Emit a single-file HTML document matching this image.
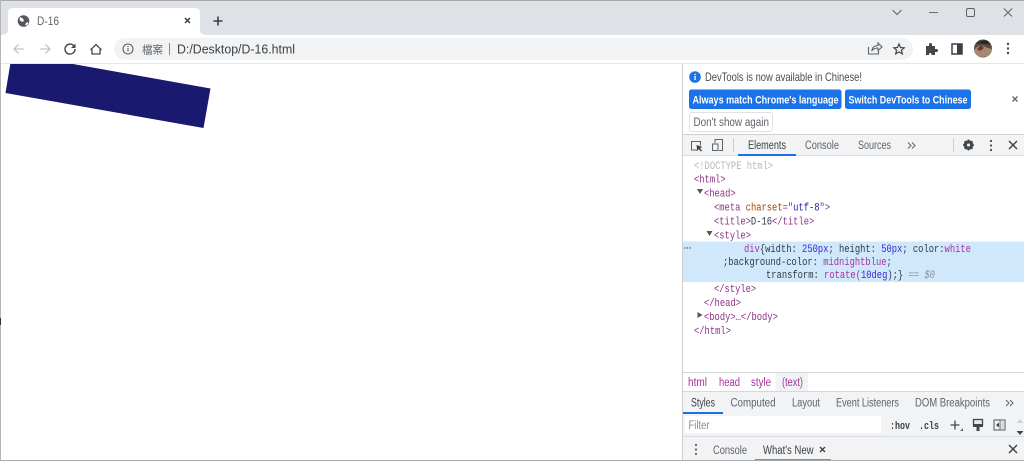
<!DOCTYPE html>
<html><head><meta charset="utf-8"><title>D-16</title>
<style>
html,body{margin:0;padding:0;background:#fff;width:1024px;height:461px;overflow:hidden}
svg{display:block;filter:blur(.35px)}
text{font-family:"Liberation Sans","Noto Sans CJK TC",sans-serif;font-size:11.5px;fill:#5f6368;white-space:pre}
.m text,text.m{font-family:"Liberation Mono",monospace;font-size:11px}
.t{fill:#8f2f8a}.a{fill:#994500}.v{fill:#1a1aa6}.d{fill:#303942}.n{fill:#3a1fd0}.p{fill:#a8329f}
text.w{fill:#fff;font-weight:bold;font-size:11px}
text.k{fill:#3c4043}
</style></head><body>
<svg width="1024" height="461" viewBox="0 0 1024 461" xmlns="http://www.w3.org/2000/svg">
<rect width="1024" height="461" fill="#fff"/>
<!-- chrome top -->
<rect width="1024" height="35" fill="#dee1e6"/>
<rect width="1024" height="1" fill="#a8a8a8"/>
<path d="M0 35C6 35 8 33 8 30V13Q8 8 13 8H195Q200 8 200 13V30C200 33 202 35 208 35Z" fill="#fff"/>
<circle cx="23.500" cy="21" r="5.800" fill="#54585c"/>
<path d="M20 17l3 1.500 1 2.500-2 1-2.500-2zM25 24.500l2-2.500 1.500 1-2 2.500z" fill="#fff"/>
<text x="37" y="25" textLength="22" lengthAdjust="spacingAndGlyphs" style="font-size:12px">D-16</text>
<path d="M185 18l5 5M190 18l-5 5" stroke="#3c4043" stroke-width="1.500" fill="none"/>
<path d="M218 16.500v9M213.500 21h9" stroke="#3c4043" stroke-width="1.600" fill="none"/>
<path d="M892.500 10l4.500 4.500 4.500-4.500" stroke="#5f6368" fill="none"/>
<rect x="929" y="12" width="9" height="1" fill="#6b6e72"/>
<rect x="966.500" y="8.500" width="8" height="8" rx="1.500" fill="none" stroke="#5f6368"/>
<path d="M1004 8.500l8 8M1012 8.500l-8 8" stroke="#5f6368" fill="none"/>
<!-- toolbar -->
<rect y="63" width="1024" height="1" fill="#e6e7e9"/>
<rect x="0" y="0" width="1" height="461" fill="#b5b5b5"/>
<rect x="0" y="318" width="1" height="7" fill="#333"/>
<path d="M24 49H14M18.500 44.500L14 49l4.500 4.500" fill="none" stroke="#c3c5c8" stroke-width="1.300"/>
<path d="M40 49H50M45.500 44.500L50 49l-4.500 4.500" fill="none" stroke="#c3c5c8" stroke-width="1.300"/>
<path d="M75 49a5 5 0 1 1-1.500-3.500" fill="none" stroke="#44474a" stroke-width="1.400"/>
<path d="M75.500 43.500v4.500h-4.500z" fill="#44474a"/>
<path d="M92 49.500v4.500h8v-4.500M90.500 50l5.500-5.500 5.500 5.500" fill="none" stroke="#44474a" stroke-width="1.300"/>
<rect x="114" y="38" width="799" height="22" rx="11" fill="#f1f3f4"/>
<circle cx="128" cy="49" r="5" fill="none" stroke="#5f6368" stroke-width="1.100"/>
<path d="M128 48v3.500M128 46v1" stroke="#5f6368" stroke-width="1.100"/>
<text x="142" y="53.500" textLength="21" lengthAdjust="spacingAndGlyphs" style="font-size:11px">檔案</text>
<rect x="169" y="43" width="1" height="12" fill="#8a8d91"/>
<text x="177" y="53.500" textLength="118" lengthAdjust="spacingAndGlyphs" style="font-size:12.500px;fill:#3c4043">D:/Desktop/D-16.html</text>
<path d="M868.500 47v7h10v-3M872 50.500c0-3 2.500-5 6-5v-2.500l4 4-4 3.500v-2.500c-3 0-4.500 1-6 2.500z" fill="none" stroke="#5f6368" stroke-width="1.100"/>
<path d="M899 44l1.500 3.500 3.700.300-2.800 2.400.900 3.700-3.300-2-3.300 2 .900-3.700-2.800-2.400 3.700-.300z" fill="none" stroke="#44474a" stroke-width="1.200"/>
<path d="M926 46h3v-1.500a1.500 1.500 0 0 1 3 0V46h3v3h1.500a1.500 1.500 0 0 1 0 3H935v3h-3.500v-1a1.300 1.300 0 0 0-2.500 0v1h-3z" fill="#44474a"/>
<rect x="952" y="44" width="10" height="10" fill="none" stroke="#3c4043" stroke-width="1.500"/>
<rect x="957" y="44" width="5" height="10" fill="#3c4043"/>
<circle cx="983" cy="48.500" r="9" fill="#5a4a44"/>
<path d="M974 50q5-6 9-4t9 3q-1 8-9 8t-9-7z" fill="#a58a72"/>
<path d="M976 44q6-5 12-3l2 4q-7-2-14-1z" fill="#27262c"/>
<path d="M977 49l4-4 3 3-4 3z" fill="#7a2f2c"/>
<circle cx="1008" cy="44" r="1.200" fill="#44474a"/><circle cx="1008" cy="48.500" r="1.200" fill="#44474a"/><circle cx="1008" cy="53" r="1.200" fill="#44474a"/>
<!-- page -->
<path d="M10.300 64H73L210.500 88.500 203.500 128 5.500 93z" fill="#191970"/>
<!-- devtools -->
<rect x="682" y="64" width="1" height="397" fill="#cfcfcf"/>
<circle cx="695" cy="77" r="5.800" fill="#1a73e8"/>
<rect x="694.400" y="76" width="1.300" height="4" fill="#fff"/><rect x="694.400" y="73.800" width="1.300" height="1.300" fill="#fff"/>
<text x="705" y="81" textLength="157" lengthAdjust="spacingAndGlyphs" style="font-size:12px;fill:#4a4d50">DevTools is now available in Chinese!</text>
<rect x="689" y="89.500" width="152.500" height="19.500" rx="2.500" fill="#1a73e8"/>
<rect x="845" y="89.500" width="126" height="19.500" rx="2.500" fill="#1a73e8"/>
<text class="w" x="692.500" y="103.500" textLength="146" lengthAdjust="spacingAndGlyphs">Always match Chrome's language</text>
<text class="w" x="848.500" y="103.500" textLength="119" lengthAdjust="spacingAndGlyphs">Switch DevTools to Chinese</text>
<rect x="689.500" y="112.500" width="83" height="19" rx="2.500" fill="#fff" stroke="#dfe1e5"/>
<text x="693.500" y="126" textLength="75.500" lengthAdjust="spacingAndGlyphs">Don't show again</text>
<path d="M1012.500 96.500l5 5M1017.500 96.500l-5 5" stroke="#5f6368" stroke-width="1.300" fill="none"/>
<!-- devtools tabbar -->
<rect x="683" y="134" width="341" height="22" fill="#f1f3f4"/>
<rect x="683" y="134" width="341" height="1" fill="#cfd1d3"/>
<rect x="683" y="155" width="341" height="1" fill="#dcdde0"/>
<path d="M698 150h-6.500v-8.500h9v4" fill="none" stroke="#5f6368" stroke-width="1"/>
<path d="M696.500 145l6 2-2.500 1 2 2.500-1.200 1-2-2.500-1.500 2z" fill="#3c4043"/>
<rect x="712.500" y="144" width="5.500" height="6.500" fill="none" stroke="#5f6368"/>
<path d="M715 143v-3.500h7.500v11H719" fill="none" stroke="#5f6368"/>
<rect x="733" y="138" width="1" height="14" fill="#cdcfd2"/>
<text class="k" x="748" y="149" textLength="38" lengthAdjust="spacingAndGlyphs">Elements</text>
<text x="805" y="149" textLength="34" lengthAdjust="spacingAndGlyphs">Console</text>
<text x="858" y="149" textLength="33" lengthAdjust="spacingAndGlyphs">Sources</text>
<path d="M908 142.500l3 3-3 3M912 142.500l3 3-3 3" fill="none" stroke="#5f6368" stroke-width="1"/>
<rect x="738" y="154" width="58" height="2" fill="#1a73e8"/>
<rect x="953" y="138" width="1" height="14" fill="#cdcfd2"/>
<circle cx="968.500" cy="145" r="3.600" fill="none" stroke="#44474a" stroke-width="2.600"/>
<path d="M968.500 139.500v11M963 145h11M964.600 141.100l7.800 7.800M972.400 141.100l-7.800 7.800" stroke="#44474a" stroke-width="1.400"/>
<circle cx="968.500" cy="145" r="1.500" fill="#f1f3f4"/>
<circle cx="991" cy="141" r="1.100" fill="#44474a"/><circle cx="991" cy="145.500" r="1.100" fill="#44474a"/><circle cx="991" cy="150" r="1.100" fill="#44474a"/>
<path d="M1009 141l8 8M1017 141l-8 8" stroke="#44474a" stroke-width="1.500" fill="none"/>
<!-- DOM -->
<rect x="683" y="241.500" width="341" height="40.500" fill="#cfe8fc"/>
<path d="M697 189h6l-3 5zM706.500 231h6l-3 5z" fill="#555"/>
<path d="M697.500 312v6l5-3z" fill="#555"/>
<circle cx="685" cy="248" r=".7" fill="#555"/><circle cx="687.500" cy="248" r=".7" fill="#555"/><circle cx="690" cy="248" r=".7" fill="#555"/>
<g class="m" transform="scale(.8 1)">
<text x="867.500" y="169" style="fill:#b8b8b8">&lt;!DOCTYPE html&gt;</text>
<text x="867.500" y="182.500" class="t">&lt;html&gt;</text>
<text x="880" y="196.500" class="t">&lt;head&gt;</text>
<text x="892.500" y="210.500"><tspan class="t">&lt;meta </tspan><tspan class="a">charset</tspan><tspan class="t">="</tspan><tspan class="v">utf-8</tspan><tspan class="t">"&gt;</tspan></text>
<text x="892.500" y="224.500"><tspan class="t">&lt;title&gt;</tspan><tspan class="d">D-16</tspan><tspan class="t">&lt;/title&gt;</tspan></text>
<text x="892.500" y="238.500" class="t">&lt;style&gt;</text>
<text x="930" y="252"><tspan class="p">div</tspan><tspan class="d">{width: </tspan><tspan class="n">250px</tspan><tspan class="d">; height: </tspan><tspan class="n">50px</tspan><tspan class="d">; color:</tspan><tspan class="p">white</tspan></text>
<text x="903.700" y="265"><tspan class="d">;background-color: </tspan><tspan class="p">midnightblue</tspan><tspan class="d">;</tspan></text>
<text x="957.500" y="278"><tspan class="d">transform: </tspan><tspan class="p">rotate(</tspan><tspan class="n">10deg</tspan><tspan class="d">);}</tspan><tspan style="fill:#8a8f96"> == </tspan><tspan style="fill:#8a8f96;font-style:italic">$0</tspan></text>
<text x="892.500" y="292" class="t">&lt;/style&gt;</text>
<text x="880" y="306" class="t">&lt;/head&gt;</text>
<text x="880" y="320" class="t">&lt;body&gt;…&lt;/body&gt;</text>
<text x="867.500" y="334" class="t">&lt;/html&gt;</text>
</g>
<!-- breadcrumbs -->
<rect x="683" y="372" width="341" height="1" fill="#d6d7d9"/>
<rect x="776" y="373" width="32" height="18" fill="#f1f3f4"/>
<text x="688" y="386" textLength="19" lengthAdjust="spacingAndGlyphs" class="p">html</text>
<text x="719" y="386" textLength="21" lengthAdjust="spacingAndGlyphs" class="p">head</text>
<text x="751" y="386" textLength="20" lengthAdjust="spacingAndGlyphs" class="p">style</text>
<text x="782" y="386" textLength="21" lengthAdjust="spacingAndGlyphs" class="p">(text)</text>
<rect x="683" y="391" width="341" height="1" fill="#d6d7d9"/>
<!-- styles tabs -->
<rect x="683" y="392" width="341" height="22" fill="#f1f3f4"/>
<text class="k" x="691" y="406.500" textLength="24" lengthAdjust="spacingAndGlyphs">Styles</text>
<text x="730.500" y="406.500" textLength="45" lengthAdjust="spacingAndGlyphs">Computed</text>
<text x="792" y="406.500" textLength="28" lengthAdjust="spacingAndGlyphs">Layout</text>
<text x="836" y="406.500" textLength="63" lengthAdjust="spacingAndGlyphs">Event Listeners</text>
<text x="915" y="406.500" textLength="75" lengthAdjust="spacingAndGlyphs">DOM Breakpoints</text>
<path d="M1006 400l3 3-3 3M1010 400l3 3-3 3" fill="none" stroke="#5f6368"/>
<rect x="683" y="412" width="40" height="2" fill="#1a73e8"/>
<!-- filter -->
<rect x="683" y="414" width="341" height="23" fill="#f1f3f4"/>
<rect x="685" y="416" width="196" height="17" fill="#fff"/>
<text x="688.500" y="429" textLength="21" lengthAdjust="spacingAndGlyphs" style="fill:#8a8d91">Filter</text>
<text class="m" x="890" y="429" textLength="20" lengthAdjust="spacingAndGlyphs" style="font-weight:bold;fill:#3c4043">:hov</text>
<text class="m" x="919" y="429" textLength="20" lengthAdjust="spacingAndGlyphs" style="font-weight:bold;fill:#3c4043">.cls</text>
<path d="M955 420.500v9M950.500 425h9" stroke="#44474a" stroke-width="1.300" fill="none"/>
<path d="M963 431h-3l3-3z" fill="#666"/>
<rect x="973.500" y="419.500" width="9" height="5.500" fill="#e8e9ea" stroke="#44474a" stroke-width="1.300"/>
<rect x="973" y="424" width="10" height="3" fill="#44474a"/>
<rect x="976.500" y="427" width="3" height="4" fill="#44474a"/>
<rect x="994" y="420" width="11" height="10" fill="none" stroke="#5f6368" stroke-width="1.100"/>
<rect x="1000" y="420" width="5" height="10" fill="#dadce0" stroke="#5f6368" stroke-width=".8"/>
<path d="M999 422.500v5l-3-2.500z" fill="#44474a"/>
<path d="M1016.500 423l3.500-4 3.500 4z" fill="#cfd1d3"/>
<path d="M1016.500 431l3.500 4 3.500-4z" fill="#44474a"/>
<rect x="683" y="436" width="341" height="1" fill="#dcdde0"/>
<!-- drawer -->
<rect x="683" y="437" width="341" height="23" fill="#f1f3f4"/>
<circle cx="696" cy="445" r="1.100" fill="#5f6368"/><circle cx="696" cy="449.500" r="1.100" fill="#5f6368"/><circle cx="696" cy="454" r="1.100" fill="#5f6368"/>
<text x="713" y="454" textLength="34" lengthAdjust="spacingAndGlyphs">Console</text>
<text class="k" x="763" y="454" textLength="50.500" lengthAdjust="spacingAndGlyphs">What's New</text>
<path d="M820 447l5 5M825 447l-5 5" stroke="#3c4043" stroke-width="1.300" fill="none"/>
<path d="M1009 445l8 8M1017 445l-8 8" stroke="#44474a" stroke-width="1.500" fill="none"/>
<rect x="755" y="459" width="76" height="1.500" fill="#5a95e8"/>
<rect x="0" y="460" width="1024" height="1" fill="#a8a8a8"/>
</svg>
</body></html>
